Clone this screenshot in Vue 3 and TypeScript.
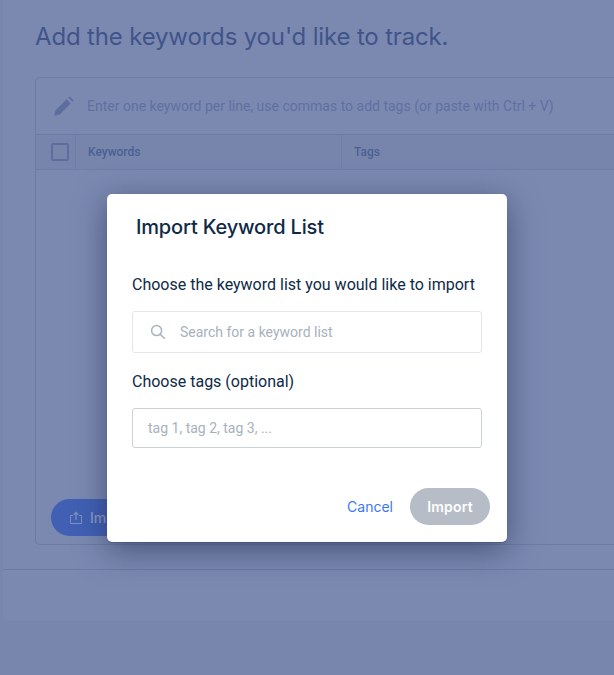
<script setup lang="ts">
const columns: { label: string; cls: string }[] = [
  { label: 'Keywords', cls: 'col-kw' },
  { label: 'Tags', cls: 'col-tags' },
]
</script>

<template>
  <div class="page">
    <main class="content">
      <div class="upper">
        <h1 class="heading">Add the keywords you'd like to track.</h1>
        <section class="card">
          <div class="entry">
            <svg class="pencil" viewBox="0 0 20 20" width="20" height="20" aria-hidden="true">
              <path d="M0.3 19.7l1.1-5.3L12.6 3.2l4.2 4.2L5.6 18.6z M14.2 1.6L15.6.3l4.1 4.1-1.3 1.4z" fill="#5c6d9e" />
            </svg>
            <span class="entry-text">Enter one keyword per line, use commas to add tags (or paste with Ctrl + V)</span>
          </div>
          <div class="thead">
            <div class="col-check"><span class="checkbox"></span></div>
            <div v-for="c in columns" :key="c.label" :class="c.cls">{{ c.label }}</div>
          </div>
          <div class="tbody"></div>
          <div class="card-foot">
            <button class="bg-btn" type="button">
              <svg viewBox="0 0 14 14" width="14" height="14" aria-hidden="true">
                <path d="M4 4.5H1.5v8h11v-8H10" fill="none" stroke="#7f90bd" stroke-width="1" />
                <path d="M7 9V1.5M4.8 3.7L7 1.5l2.2 2.2" fill="none" stroke="#7f90bd" stroke-width="1.3" />
              </svg>
              <span>Import</span>
            </button>
          </div>
        </section>
      </div>
      <div class="bottom-panel"></div>
    </main>

    <div class="overlay">
      <div class="modal">
        <h2 class="modal-title">Import Keyword List</h2>
        <p class="label first">Choose the keyword list you would like to import</p>
        <div class="search">
          <svg viewBox="0 0 16 16" width="16" height="16" aria-hidden="true">
            <circle cx="6.6" cy="6.6" r="5" fill="none" stroke="#a9b3bf" stroke-width="1.5" />
            <path d="M10.2 10.2l4.6 4.6" fill="none" stroke="#a9b3bf" stroke-width="1.5" />
          </svg>
          <span class="placeholder">Search for a keyword list</span>
        </div>
        <p class="label second">Choose tags (optional)</p>
        <div class="tags-input"><span class="placeholder">tag 1, tag 2, tag 3, ...</span></div>
        <div class="actions">
          <button class="cancel" type="button">Cancel</button>
          <button class="import" type="button">Import</button>
        </div>
      </div>
    </div>
  </div>
</template>

<style>
html, body { margin: 0; padding: 0; background: #7886ae; }
</style>

<style scoped>
.page {
  position: relative;
  width: 614px;
  height: 675px;
  overflow: hidden;
  background: #7886ae;
  font-family: Roboto, sans-serif;
}
.content { padding-left: 3px; }
.upper { background: #7b89b1; }
.heading {
  margin: 0;
  padding: 20px 0 0 32px;
  height: 77px;
  box-sizing: border-box;
  font: 400 24px/34px "Inter", sans-serif;
  letter-spacing: -0.16px;
  color: #41548a;
}
.card {
  margin-left: 32px;
  height: 468px;
  box-sizing: border-box;
  border: 1px solid #6c7ba6;
  border-right: 0;
  border-radius: 5px 0 0 5px;
  display: flex;
  flex-direction: column;
}
.entry {
  height: 56px;
  flex: none;
  display: flex;
  align-items: center;
  padding-left: 18px;
  gap: 13px;
  border-bottom: 1px solid #6c7ba6;
}
.entry-text { font-size: 14px; color: #5f70a0; }
.thead {
  height: 34px;
  flex: none;
  display: flex;
  background: #7785ad;
  border-bottom: 1px solid #6f7ea9;
  font-size: 12px;
  font-weight: 500;
  color: #4c5f92;
  line-height: 34px;
}
.col-check { width: 40px; border-right: 1px solid #6f7ea9; display: flex; align-items: center; flex: none; padding-left: 15px; box-sizing: border-box; }
.checkbox { width: 18px; height: 18px; border: 2px solid #5c6d9e; border-radius: 2px; box-sizing: border-box; }
.col-kw { width: 266px; padding-left: 12px; box-sizing: border-box; border-right: 1px solid #6f7ea9; flex: none; }
.col-tags { padding-left: 12px; flex: 1; }
.tbody { flex: 1; }
.card-foot { height: 45px; flex: none; padding-left: 15px; }
.bg-btn {
  width: 120px;
  height: 37px;
  padding: 0 0 0 18px;
  border: 0;
  border-radius: 19px;
  background: #4160b4;
  color: #8c9dc6;
  display: flex;
  align-items: center;
  gap: 7px;
  font: 500 14px Inter, sans-serif;
}
.bottom-panel {
  height: 76px;
  box-sizing: border-box;
  padding-top: 24px;
  background: #7b89b1;
  border-radius: 0 0 0 5px;
}
.bottom-panel::before {
  content: "";
  display: block;
  height: 1px;
  background: #6c7ba6;
}
.overlay {
  position: absolute;
  inset: 0;
  display: flex;
  justify-content: center;
  align-items: flex-start;
  padding-top: 194px;
  box-sizing: border-box;
}
.modal {
  width: 400px;
  height: 348px;
  box-sizing: border-box;
  background: #fff;
  border-radius: 5px;
  box-shadow: 0 1px 1px rgba(60, 70, 100, 0.5), 0 8px 32px rgba(35, 45, 80, 0.6);
  padding: 20px 17px 0 25px;
  color: #0f2a47;
  display: flex;
  flex-direction: column;
}
.modal-title {
  margin: 0 0 0 4px;
  font: 500 20px/27px Inter, sans-serif;
  letter-spacing: -0.17px;
  color: #0f2a47;
}
.label { margin: 0; font-size: 16px; line-height: 22px; color: #0f2a47; }
.label.first { margin-top: 33px; }
.label.second { margin-top: 18px; }
.search {
  margin-top: 15px;
  width: 350px;
  height: 42px;
  box-sizing: border-box;
  border: 1px solid #e3e7ec;
  border-radius: 3px;
  display: flex;
  align-items: center;
  padding-left: 17px;
  gap: 14px;
}
.tags-input {
  margin-top: 15px;
  width: 350px;
  height: 40px;
  box-sizing: border-box;
  border: 1px solid #ccd2da;
  border-radius: 3px;
  display: flex;
  align-items: center;
  padding-left: 15px;
}
.placeholder { font-size: 14px; color: #a8b1bd; }
.actions {
  margin-top: 40px;
  display: flex;
  justify-content: flex-end;
  align-items: center;
  gap: 17px;
}
.cancel {
  border: 0;
  background: none;
  padding: 0;
  font: 400 14px Inter, sans-serif;
  color: #3d78f7;
}
.import {
  width: 80px;
  height: 37px;
  border: 0;
  border-radius: 19px;
  background: #b6bdc7;
  color: #fff;
  font: 600 14px Inter, sans-serif;
  letter-spacing: 0.2px;
  padding: 0;
}
</style>
